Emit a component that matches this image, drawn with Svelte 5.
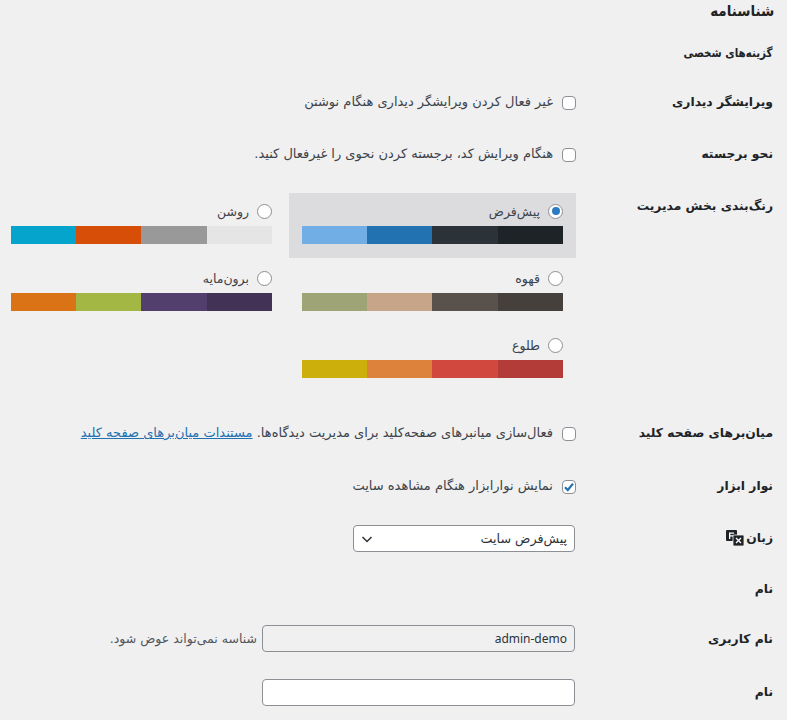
<script>
const palettes = [
  {n:'پیش‌فرض',c:['#72aee6','#2271b1','#2c3338','#1d2327'],sel:true},
  {n:'روشن',c:['#04a4cc','#d64e07','#999999','#e5e5e5']},
  {n:'قهوه',c:['#9ea476','#c7a589','#59524c','#46403c']},
  {n:'برون‌مایه',c:['#d97316','#a3b745','#523f6d','#413256']},
  {n:'طلوع',c:['#ccaf0b','#dd823b','#d1483f','#b43c38']}
];
</script>

<div class="page" dir="rtl">
  <h2 class="title"><span>شناسنامه</span></h2>
  <h3 class="sub"><span>گزینه‌های شخصی</span></h3>

  <div class="row r1"><div class="lab">ویرایشگر دیداری</div><label class="fld"><span class="cb"></span>غیر فعال کردن ویرایشگر دیداری هنگام نوشتن</label></div>
  <div class="row r2"><div class="lab">نحو برجسته</div><label class="fld"><span class="cb"></span>هنگام ویرایش کد، برجسته کردن نحوی را غیرفعال کنید.</label></div>

  <div class="row r3">
    <div class="lab mt">رنگ‌بندی بخش مدیریت</div>
    <div class="pal">
      {#each palettes as p}
        <div class="p" class:sel={p.sel}>
          <div class="pn"><span class="radio" class:on={p.sel}></span>{p.n}</div>
          <div class="strip" dir="ltr">{#each p.c as c}<i style="background:{c}"></i>{/each}</div>
        </div>
      {/each}
    </div>
  </div>

  <div class="row r4"><div class="lab">میان‌برهای صفحه کلید</div><label class="fld"><span class="cb"></span><span>فعال‌سازی میانبرهای صفحه‌کلید برای مدیریت دیدگاه‌ها. <a href="#a">مستندات میان‌برهای صفحه کلید</a></span></label></div>
  <div class="row r5"><div class="lab">نوار ابزار</div><label class="fld"><span class="cb"><svg viewBox="0 0 14 14" width="14" height="14"><path d="M3 7.200 5.800 10 11 3.600" fill="none" stroke="#2271b1" stroke-width="2.200"/></svg></span>نمایش نوارابزار هنگام مشاهده سایت</label></div>
  <div class="row r6"><div class="lab mt zb">زبان <svg class="tr" viewBox="0 0 18 16" width="18" height="16"><rect x="0" y="0" width="11" height="11" rx="1" fill="#1d2327"/><path fill="#fff" d="M3 2.500h5v1.200H4.300v1.500h3.200v1.200H4.300V9H3z"/><rect x="7" y="5" width="11" height="11" rx="1" fill="#1d2327" stroke="#f0f0f1" stroke-width=".8"/><path fill="none" stroke="#fff" stroke-width="1.300" d="M10 8l5 5M15 8l-5 5"/></svg></div><div class="fld"><div class="select"><span>پیش‌فرض سایت</span><svg viewBox="0 0 16 16" width="16" height="16"><path d="M3.500 6l4.500 4.500L12.500 6" fill="none" stroke="#2c3338" stroke-width="1.500"/></svg></div></div></div>
  <h3 class="sub s2">نام</h3>
  <div class="row r7"><div class="lab mt4">نام کاربری</div><div class="fld g5"><div class="input dis">admin-demo</div><span class="desc">شناسه نمی‌تواند عوض شود.</span></div></div>
  <div class="row r8"><div class="lab mt">نام</div><div class="fld"><div class="input"></div></div></div>
</div>

<style>
:global(body){margin:0;background:#f0f0f1;overflow:hidden}
.page{height:720px;width:787px;overflow:hidden;box-sizing:border-box;font-family:"DejaVu Sans",sans-serif;font-size:13px;color:#3c434a;padding-right:13px}
.title{margin:1px 0 0;font-size:15px;font-weight:700;color:#1d2327;line-height:20px;height:20px}
.title span{display:inline-block;transform:scaleX(.9);transform-origin:right center}
.sub{margin:0;font-size:12px;font-weight:700;color:#1d2327;line-height:22px;height:22px;padding-right:1px}
.sub span{display:inline-block;transform:scaleX(.86);transform-origin:right center;white-space:nowrap}
.title + .sub{margin-top:21px}
.row{display:flex;align-items:flex-start}
.lab{width:198px;box-sizing:border-box;padding-right:1px;flex:none;font-size:12.300px;font-weight:700;color:#1d2327;line-height:20px;display:flex;gap:4px;align-items:center}
.lab.mt{margin-top:3px}
.lab.mt4{margin-top:4px}
.lab.zb{gap:2px}
.fld{display:flex;align-items:center;gap:9px;line-height:20px}
.fld.g5{gap:5px}
.cb{width:14px;height:14px;box-sizing:border-box;border:1px solid #8c8f94;border-radius:4px;background:#fff;display:block;flex:none;position:relative;margin-top:1px}
.cb svg{position:absolute;left:-1px;top:-1px}
.r1{margin-top:28px}.r2{margin-top:32px}.r3{margin-top:29px}
.pal{display:grid;grid-template-columns:287px 287px;row-gap:2px;column-gap:4px;width:578px}
.p{padding:8px 13px 0;height:65px;box-sizing:border-box}
.p.sel{background:#dcdcde}
.pn{display:flex;align-items:center;gap:8px;height:20px;margin-bottom:5px;font-size:12.500px}
.radio{width:15px;height:15px;box-sizing:border-box;border:1px solid #8c8f94;border-radius:50%;background:#fff;position:relative;flex:none}
.radio.on::after{content:"";position:absolute;inset:2.500px;border-radius:50%;background:#2a7bc4}
.strip{display:grid;grid-template-columns:65px 65px 66px 65px;height:18px}
.strip i{display:block}
.r4{margin-top:31px}.r5{margin-top:33px}.r6{margin-top:29px}
a{color:#2271b1;text-decoration:underline}
.select{width:222px;margin-right:1px;height:27px;box-sizing:border-box;border:1px solid #8c8f94;border-radius:4px;background:#fff;display:flex;justify-content:space-between;align-items:center;padding:0 7px 0 5px;color:#2c3338;font-size:12.700px}
.s2{margin-top:26px;font-size:12.300px;height:22px}
.r7{margin-top:25px}.r8{margin-top:27px}
.input{width:313px;margin-right:1px;height:27px;box-sizing:border-box;border:1px solid #8c8f94;border-radius:4px;background:#fff;padding:0 7px;line-height:25px;color:#2c3338}
.input.dis{background:#f0f0f1;font-family:"Noto Sans",sans-serif;font-size:12px}
.desc{font-size:12.500px;color:#50575e}
</style>
